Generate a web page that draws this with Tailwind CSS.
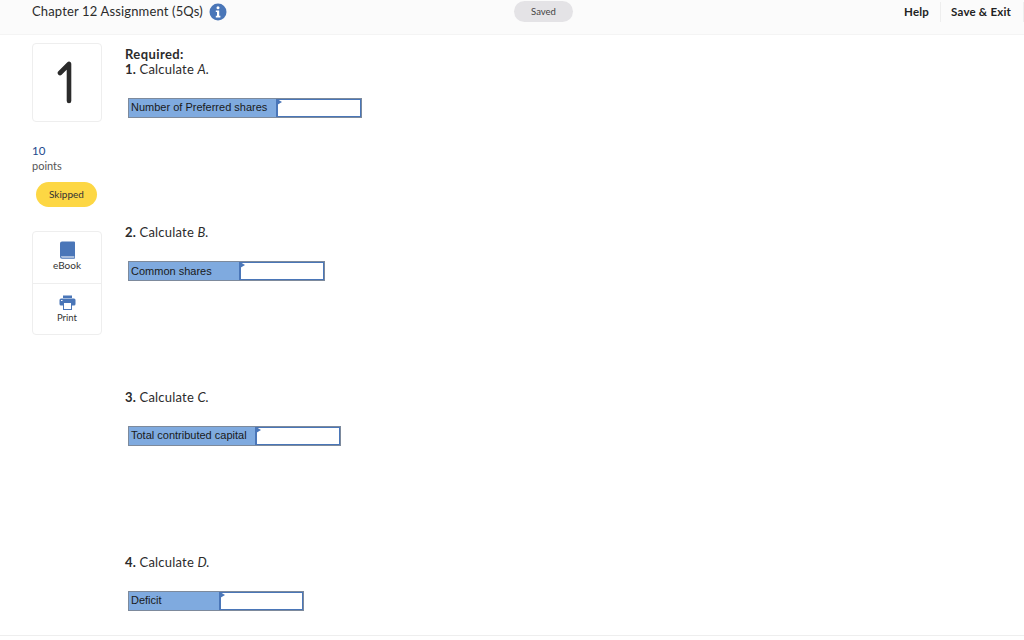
<!DOCTYPE html>
<html>
<head>
<meta charset="utf-8">
<script src="https://cdn.jsdelivr.net/npm/@tailwindcss/browser@4"></script>
</head>
<body class="bg-white">
<div class="w-[1024px] h-[640px] overflow-hidden font-['Lato',sans-serif] text-[#2b2b2b] flex flex-col">
  <header class="h-[35px] shrink-0 bg-[#fbfbfb] border-b border-[#f4f4f4] flex items-start relative">
    <div class="flex items-center pl-8 h-[23px] w-[514px]">
      <span class="text-[13px] tracking-[0.15px]">Chapter 12 Assignment (5Qs)</span>
      <svg class="ml-[6px] w-[18px] h-[18px] mt-[1px]" viewBox="0 0 18 18"><circle cx="9" cy="9" r="8.5" fill="#4a76b8"/><circle cx="9" cy="4.8" r="1.5" fill="#fff"/><path d="M6.8 7.4h3.4v5.4h1.2v1.6H6.8v-1.6H8V9H6.8z" fill="#fff"/></svg>
    </div>
    <div class="mt-[1px] w-[59px] h-[21px] rounded-full bg-[#e4e3e6] flex items-center justify-center text-[9.5px] pt-[1px] text-[#444]">Saved</div>
    <div class="ml-auto flex items-center h-[21px] mt-[1px] text-[11.5px] font-bold text-[#222]">
      <span class="pr-[11px] tracking-[0.2px]">Help</span>
      <span class="border-l border-[#eeeeee] border-r pl-[10px] pr-[12px] h-[20px] leading-[20px] tracking-[0.2px]">Save &amp; Exit</span>
    </div>
  </header>
  <main class="flex flex-1 relative">
    <aside class="w-[125px] shrink-0 pl-8 pt-[8px]">
      <div class="w-[70px] h-[79px] border border-[#eeeeee] rounded-[4px] flex items-center justify-center">
        <svg class="w-[20px] h-[44px]" viewBox="0 0 20 44"><path d="M3 12 L12 3 V40" fill="none" stroke="#2b2b2b" stroke-width="4.6" stroke-linecap="round" stroke-linejoin="round"/></svg>
      </div>
      <div class="mt-[21px] text-[11.5px] leading-[15px] text-[#1c4a8c]">10</div>
      <div class="text-[11px] leading-[15px] text-[#555]">points</div>
      <div class="mt-[9px] ml-[4px] w-[61px] h-[25px] rounded-full bg-[#fdd744] flex items-center justify-center text-[10px] text-[#333]">Skipped</div>
      <div class="mt-[24px] w-[70px] h-[104px] border border-[#eeeeee] rounded-[4px] flex flex-col">
        <div class="h-[52px] border-b border-[#eeeeee] flex flex-col items-center pt-[9px]">
          <svg class="w-[17px] h-[18px]" viewBox="0 0 16 18"><path d="M2.5 0.5H14.5a1 1 0 0 1 1 1V17a.8.8 0 0 1-.8.8H2.5A2 2 0 0 1 .5 15.8V2.5A2 2 0 0 1 2.5.5z" fill="#4a76b8"/><path d="M1.2 15.2h13.6v1.6H2.4z" fill="#c9d6ea"/></svg>
          <span class="text-[10px] leading-[12px] text-[#333]">eBook</span>
        </div>
        <div class="flex-1 flex flex-col items-center pt-[11px]">
          <svg class="w-[17px] h-[15px]" viewBox="0 0 17 15"><rect x="4" y="0.5" width="9" height="2.5" fill="#4a76b8"/><rect x="0.5" y="3.5" width="16" height="7" rx="1.5" fill="#4a76b8"/><rect x="4.5" y="7.5" width="8" height="7" fill="#fff" stroke="#4a76b8"/><rect x="2" y="5" width="1.5" height="1" fill="#fff"/></svg>
          <span class="text-[9.5px] leading-[12px] mt-[2px] text-[#333]">Print</span>
        </div>
      </div>
    </aside>
    <section class="flex-1 text-[13px] leading-[15px] tracking-[0.2px]">
      <div class="mt-[12px] font-bold tracking-[0.4px]">Required:</div>
      <div><b>1.</b> Calculate <i>A.</i></div>
      <div class="mt-[21px] ml-[3px] h-[20px] w-[234px] flex border border-[#7d8a9c] bg-[#7faadf] font-['Liberation_Sans',sans-serif] text-[11px] tracking-normal text-[#1a1a1a]">
        <div class="w-[147px] pl-[2px] leading-[17px] whitespace-nowrap">Number of Preferred shares</div>
        <div class="flex-1 relative bg-white border border-l-2 border-[#4a76b8]"><div class="absolute -left-[1px] -top-[1px] border-y-[3px] border-y-transparent border-l-[5px] border-l-[#4a76b8]"></div></div>
      </div>
      <div class="mt-[107px]"><b>2.</b> Calculate <i>B.</i></div>
      <div class="mt-[21px] ml-[3px] h-[20px] w-[197px] flex border border-[#7d8a9c] bg-[#7faadf] font-['Liberation_Sans',sans-serif] text-[11px] tracking-normal text-[#1a1a1a]">
        <div class="w-[110px] pl-[2px] leading-[18px]">Common shares</div>
        <div class="flex-1 relative bg-white border border-l-2 border-[#4a76b8]"><div class="absolute -left-[1px] -top-[1px] border-y-[3px] border-y-transparent border-l-[5px] border-l-[#4a76b8]"></div></div>
      </div>
      <div class="mt-[109px]"><b>3.</b> Calculate <i>C.</i></div>
      <div class="mt-[21px] ml-[3px] h-[20px] w-[213px] flex border border-[#7d8a9c] bg-[#7faadf] font-['Liberation_Sans',sans-serif] text-[11px] tracking-normal text-[#1a1a1a]">
        <div class="w-[126px] pl-[2px] leading-[17px] whitespace-nowrap">Total contributed capital</div>
        <div class="flex-1 relative bg-white border border-l-2 border-[#4a76b8]"><div class="absolute -left-[1px] -top-[1px] border-y-[3px] border-y-transparent border-l-[5px] border-l-[#4a76b8]"></div></div>
      </div>
      <div class="mt-[109px]"><b>4.</b> Calculate <i>D.</i></div>
      <div class="mt-[21px] ml-[3px] h-[20px] w-[176px] flex border border-[#7d8a9c] bg-[#7faadf] font-['Liberation_Sans',sans-serif] text-[11px] tracking-normal text-[#1a1a1a]">
        <div class="w-[90px] pl-[2px] leading-[17px]">Deficit</div>
        <div class="flex-1 relative bg-white border border-l-2 border-[#4a76b8]"><div class="absolute -left-[1px] -top-[1px] border-y-[3px] border-y-transparent border-l-[5px] border-l-[#4a76b8]"></div></div>
      </div>
    </section>
    <div class="absolute left-0 right-0 top-[600px] border-t border-[#eeeeee]"></div>
  </main>
</div>
</body>
</html>
